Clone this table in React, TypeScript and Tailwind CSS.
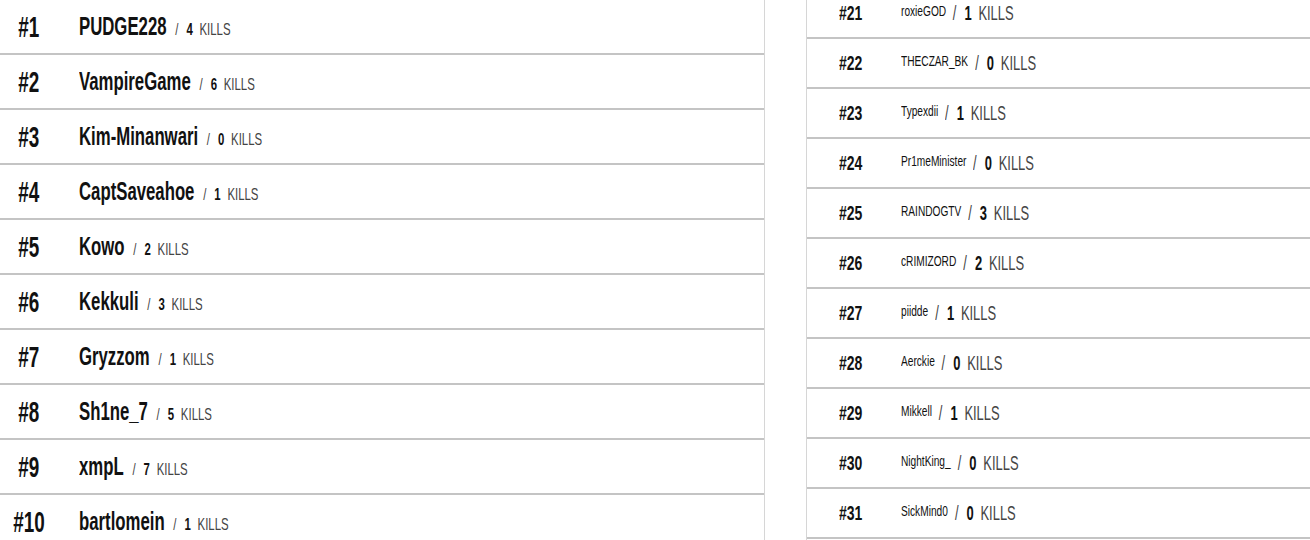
import React from 'react';

interface Player {
  rank: number;
  name: string;
  kills: number;
}

const topPlayers: Player[] = [
  { rank: 1, name: 'PUDGE228', kills: 4 },
  { rank: 2, name: 'VampireGame', kills: 6 },
  { rank: 3, name: 'Kim-Minanwari', kills: 0 },
  { rank: 4, name: 'CaptSaveahoe', kills: 1 },
  { rank: 5, name: 'Kowo', kills: 2 },
  { rank: 6, name: 'Kekkuli', kills: 3 },
  { rank: 7, name: 'Gryzzom', kills: 1 },
  { rank: 8, name: 'Sh1ne_7', kills: 5 },
  { rank: 9, name: 'xmpL', kills: 7 },
  { rank: 10, name: 'bartlomein', kills: 1 },
];

const otherPlayers: Player[] = [
  { rank: 21, name: 'roxieGOD', kills: 1 },
  { rank: 22, name: 'THECZAR_BK', kills: 0 },
  { rank: 23, name: 'Typexdii', kills: 1 },
  { rank: 24, name: 'Pr1meMinister', kills: 0 },
  { rank: 25, name: 'RAINDOGTV', kills: 3 },
  { rank: 26, name: 'cRIMIZORD', kills: 2 },
  { rank: 27, name: 'piidde', kills: 1 },
  { rank: 28, name: 'Aerckie', kills: 0 },
  { rank: 29, name: 'Mikkell', kills: 1 },
  { rank: 30, name: 'NightKing_', kills: 0 },
  { rank: 31, name: 'SickMind0', kills: 0 },
];

// no condensed face installed, so the Arial-metric font gets squeezed horizontally
const font = "font-['Liberation_Sans',Arial,sans-serif]";

const App: React.FC = () => {
  return (
    <div className={`flex bg-white text-[#111] ${font} h-[540px] overflow-hidden`}>
      {/* Top 10 */}
      <div className="w-[765px] shrink-0 border-r border-[#d6d6d6]">
        {topPlayers.map((p) => (
          <div key={p.rank} className="flex items-center h-[53px] box-content border-b-2 border-[#c4c4c4]">
            <div className="w-[58px] flex justify-center">
              <span className="inline-block scale-x-[0.63] text-[30px] font-bold whitespace-nowrap">#{p.rank}</span>
            </div>
            <div className="ml-[21px] flex items-baseline whitespace-nowrap origin-left scale-x-[0.67]">
              <span className="text-[25px] font-bold">{p.name}</span>
              <span className="ml-[13px] text-[17px] text-[#444]">/</span>
              <span className="ml-[12px] text-[17px] font-bold">{p.kills}</span>
              <span className="ml-[10px] text-[17px] text-[#444]">KILLS</span>
            </div>
          </div>
        ))}
      </div>

      {/* Rest of the ladder */}
      <div className="ml-[41px] flex-1 border-l border-[#d6d6d6] -mt-[11px]">
        {otherPlayers.map((p) => (
          <div key={p.rank} className="flex items-center h-[48px] box-content border-b-2 border-[#c4c4c4]">
            <div className="w-[88px] flex justify-center">
              <span className="inline-block scale-x-[0.7] text-[20px] font-bold whitespace-nowrap">#{p.rank}</span>
            </div>
            <div className="ml-[6px] flex items-center whitespace-nowrap origin-left scale-x-[0.7]">
              <span className="-mt-[3px] text-[14.5px] font-medium">{p.name}</span>
              <span className="ml-[10px] inline-flex items-baseline origin-left scale-x-[0.88] text-[21px]">
                <span className="text-[#444]">/</span>
                <span className="ml-[13px] font-bold">{p.kills}</span>
                <span className="ml-[11px] text-[#444]">KILLS</span>
              </span>
            </div>
          </div>
        ))}
      </div>
    </div>
  );
};

export default App;
